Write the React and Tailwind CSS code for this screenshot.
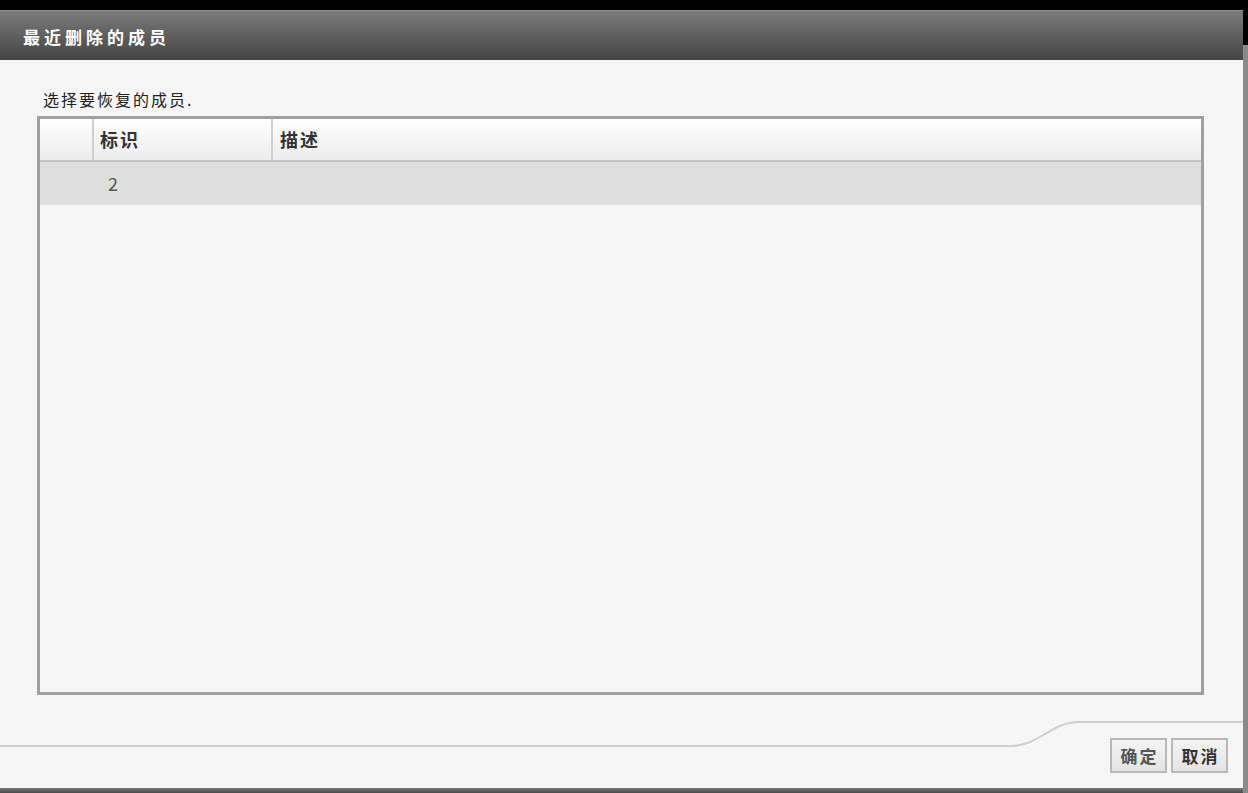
export default function App() {
  const font = { fontFamily: '"Noto Sans CJK SC", "Noto Sans", sans-serif' };
  return (
    <div className="w-[1248px] h-[793px] bg-black flex flex-col overflow-hidden" style={font}>
      <div className="h-[10px] bg-black" />
      <div className="flex flex-1 min-h-0">
        <div className="w-[1243px] flex flex-col bg-[#f6f6f6]">
          {/* title bar */}
          <div className="h-[50px] border-t border-[#8e8e8e] bg-gradient-to-b from-[#7b7b7b] to-[#454545] flex items-center pl-[23px]">
            <span className="text-white font-bold text-[17px] leading-[20px] tracking-[4px] mt-[3px]">最近删除的成员</span>
          </div>
          {/* body */}
          <div className="flex-1 flex flex-col pl-[37px] pr-[39px] pt-[29px]">
            <div className="text-[16px] text-[#222] leading-[20px] pl-[6px] mb-[7px] tracking-[2px]">选择要恢复的成员.</div>
            <div className="h-[579px] border-[3px] border-[#a0a0a0] bg-[#f6f6f6] flex flex-col">
              <div className="flex h-[43px] border-b-2 border-[#c4c4c4] bg-gradient-to-b from-[#ffffff] to-[#ececec]">
                <div className="w-[54px] border-r-2 border-[#cfcfcf]" />
                <div className="w-[179px] border-r-2 border-[#cfcfcf] flex items-center pl-[6px] text-[18px] font-bold text-[#333] tracking-[2px]">标识</div>
                <div className="flex-1 flex items-center pl-[7px] text-[18px] font-bold text-[#333] tracking-[2px]">描述</div>
              </div>
              <div className="flex h-[43px] bg-[#dedede]">
                <div className="w-[54px]" />
                <div className="flex items-center pl-[14px] text-[18px] text-[#555]">2</div>
              </div>
            </div>
            <div className="flex-1" />
          </div>
          {/* footer */}
          <div className="relative h-[93px] flex items-start justify-end pr-[15px] pt-[43px]">
            <svg className="absolute left-0 top-[26px]" width="1243" height="30" viewBox="0 0 1243 30">
              <path d="M0 25 L1010 25 C1040 25 1050 1 1080 1 L1243 1" fill="none" stroke="#cfcfcf" strokeWidth="2" />
            </svg>
            <div className="relative flex gap-[4px]">
              <button className="w-[57px] h-[35px] border-2 border-[#b8b8b8] bg-gradient-to-b from-[#f4f4f4] to-[#e4e4e4] text-[17px] font-bold text-[#555] tracking-[2px] pl-[2px]">确定</button>
              <button className="w-[57px] h-[35px] border-2 border-[#b8b8b8] bg-gradient-to-b from-[#f4f4f4] to-[#e4e4e4] text-[17px] font-bold text-[#333] tracking-[2px] pl-[2px]">取消</button>
            </div>
          </div>
          <div className="h-[5px] bg-gradient-to-b from-[#7a7a7a] to-[#4a4a4a]" />
        </div>
        <div className="w-[5px] flex flex-col">
          <div className="h-[35px] bg-black" />
          <div className="flex-1 bg-[#8a8a8a]" />
        </div>
      </div>
    </div>
  );
}
